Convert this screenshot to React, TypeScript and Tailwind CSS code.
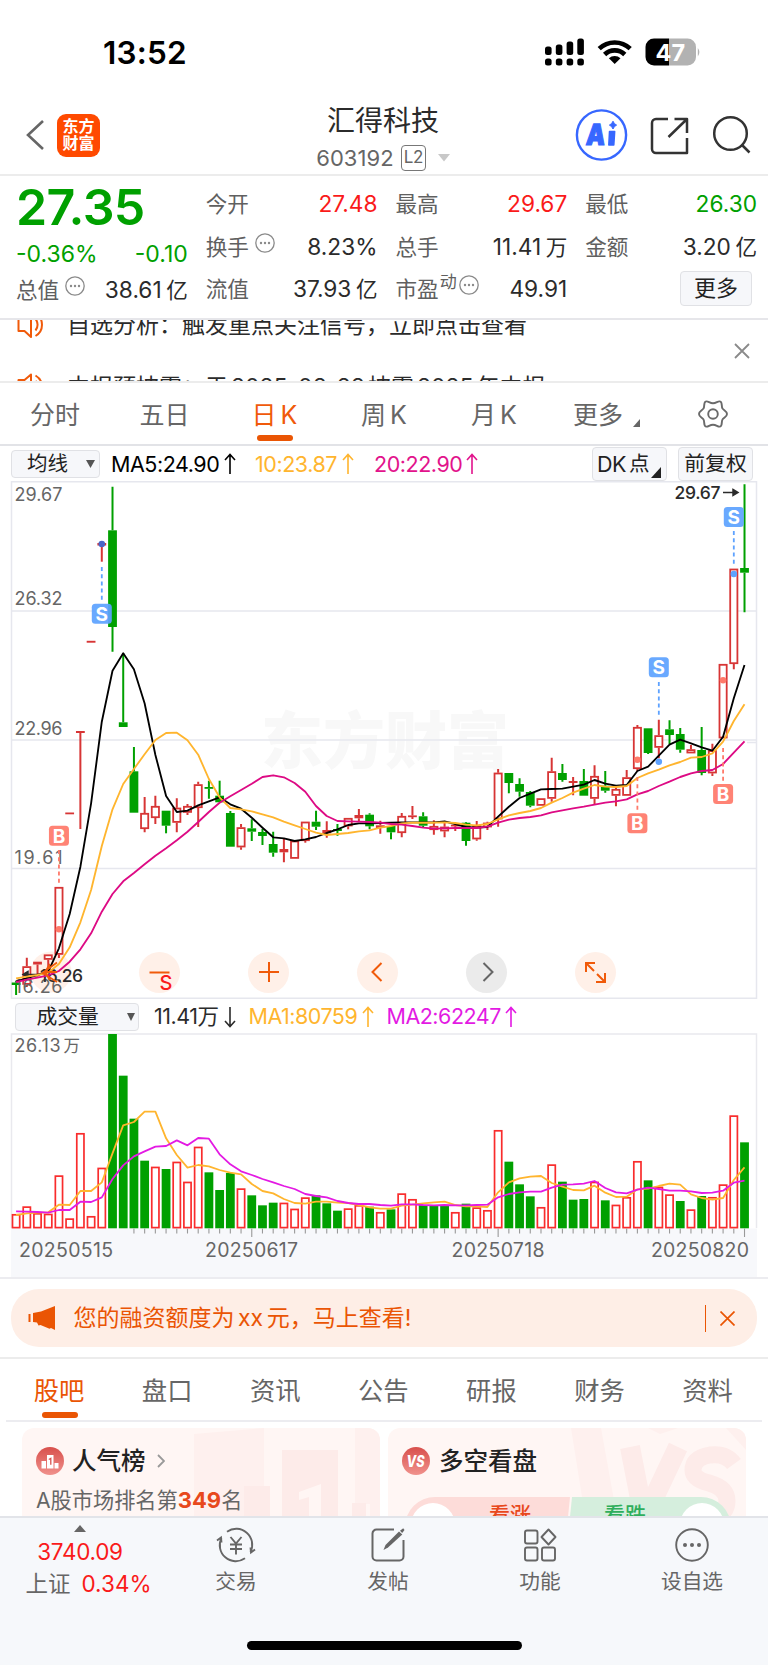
import React from "react";

type Candle = [up: 0 | 1, high: number, top: number, bottom: number, low: number];

// one entry per trading day: direction, high, body top, body bottom, low (chart y)
const candles: Candle[] = [
  [0, 980.7, 982.5, 985, 995], [1, 957.7, 966.3, 984.7, 987], [1, 961.7, 961.7, 964.5, 976.7], [1, 954.5, 954.5, 959.7, 973],
  [1, 887, 887, 954.7, 958], [1, 812.5, 812.5, 814.3, 814.3], [1, 731, 731, 733, 829], [1, 640.8, 640.8, 642.7, 642.7],
  [1, 543, 543, 545.5, 561.7], [0, 486.7, 530.3, 627, 651.7], [0, 653, 722.3, 727, 727], [0, 747, 771.3, 812.7, 812.7],
  [1, 797, 813, 829, 832.3], [1, 795.7, 806, 818, 824], [0, 810.7, 810.7, 825.7, 833.3], [1, 798.3, 807.7, 822.7, 832.3],
  [1, 804, 806, 812.7, 815], [1, 781.7, 784.3, 808, 827], [0, 780.7, 787, 788.7, 798.7], [0, 780.7, 795.7, 802.3, 802.3],
  [0, 811, 813, 846.7, 846.7], [1, 824, 827.3, 847.3, 849.7], [0, 819.3, 828.3, 831.7, 841], [0, 829, 832, 836, 845],
  [0, 831.7, 844, 852.7, 856.7], [1, 839, 849, 852.3, 862.3], [1, 840.7, 840.7, 858.7, 858.7], [1, 821.7, 821.7, 841, 842.7],
  [0, 810.7, 821.7, 826.7, 830], [1, 821.3, 830, 833.3, 837.7], [0, 824, 829, 831, 835.7], [1, 818, 818, 826.3, 829.3],
  [1, 809, 815, 818.3, 821.7], [0, 813.3, 814.7, 826.3, 829.3], [1, 820.7, 825.3, 828, 833.7], [0, 826, 826, 832.3, 839.3],
  [1, 813, 816, 833, 837.3], [1, 806, 815.4, 816.8, 819], [0, 812.3, 816.3, 825.7, 827.3], [1, 820.3, 826, 830, 834.7],
  [1, 822.7, 826.7, 831.3, 837.3], [1, 823.3, 824.7, 826.3, 831], [0, 822, 822.7, 841, 845.7], [1, 821, 825.3, 839.3, 840.7],
  [1, 821.7, 822.7, 827.3, 830], [1, 769, 772.7, 819.3, 826.7], [0, 773, 773, 783, 793.3], [0, 778.3, 784, 791.7, 796.7],
  [0, 791, 792, 805.7, 807.3], [1, 798.3, 798.3, 805.7, 805.7], [1, 757.7, 771.3, 798.7, 801.7], [0, 764, 773, 780, 781.7],
  [1, 777, 781, 783, 795.3], [0, 769, 781, 795.7, 795.7], [1, 765.3, 776, 798.7, 804.3], [0, 771, 785.7, 790.7, 792.7],
  [1, 785, 789, 795.7, 806.3], [1, 770, 777.3, 795.7, 795.7], [1, 725, 727, 769, 771], [0, 728.3, 728.3, 753, 754],
  [1, 719.7, 735.3, 747.7, 758.3], [0, 720.3, 729.3, 735, 744], [0, 728, 734, 749.7, 752.7], [1, 745, 749.3, 753.3, 753.3],
  [0, 727, 750, 773, 775.3], [1, 743.7, 750.3, 773.3, 776], [1, 664, 664, 738.3, 738.3], [1, 568.7, 568.7, 664, 669.3],
  [0, 484.3, 568, 572.7, 612.3],
];

const ma5 = [
  981.7, 978, 975, 971.7, 948.3, 914, 866.7, 803.3, 721.7, 670.7, 653.3, 669.3, 703.3, 755, 796, 812, 810.7, 805.3, 801.3, 797.3,
  804.3, 808.7, 817.7, 827.7, 837.3, 838.3, 841, 839.3, 837, 833, 829.3, 825, 823.3, 823.3, 823, 822.7, 822.5, 822.3, 822.3, 822.3,
  821.3, 824, 827, 827.7, 827, 816.7, 806.7, 798, 793.7, 789.3, 789, 788.7, 786.7, 784.7, 780, 783.7, 785.7, 785, 771, 766.7,
  755.7, 744.7, 739.7, 743.3, 747.3, 750.7, 736.7, 698.3, 665,
];
const ma10 = [
  978.3, 976.7, 975, 972.7, 964, 947.3, 922.3, 890, 846, 809.3, 784, 769, 754.3, 740, 733, 732.7, 740.3, 754.7, 779, 797.3,
  808, 809.3, 811.3, 814.3, 817.3, 821.7, 825.3, 829, 832.7, 835, 834, 833, 831.3, 830.3, 827.7, 826, 823.3, 822.7, 822.7, 822.7,
  822.3, 823, 824.7, 825.3, 824, 819.3, 815.3, 813, 811, 808, 802.7, 798, 792.7, 788.7, 785, 786.7, 787, 786, 778, 773.3,
  769.7, 765.3, 762, 757.7, 757, 753.3, 741.7, 721, 704.3,
];
const ma20 = [
  982, 979.7, 977.7, 975.3, 971, 961.7, 949.3, 933.3, 911.7, 894, 881.3, 873, 864.3, 855.7, 848.3, 840.3, 831.7, 822, 812, 802.7,
  796.3, 790, 783.7, 777, 775.3, 777.3, 783, 791.7, 806, 816, 821, 821.3, 821.7, 822, 822.7, 824, 824.7, 826, 827.7, 828.7,
  828.3, 828, 828, 828, 826.7, 822.7, 819.7, 818, 817, 815.3, 812.3, 810.3, 808.3, 806.7, 804.7, 802.7, 801.3, 799.3, 794.3, 791,
  786, 781.7, 777, 773.3, 771, 770, 764, 752.7, 741.3,
];

// volume bar tops, in thirds of a pixel below y=1000
const volumes = [
  642, 619, 639, 641, 526, 655, 399, 648, 503, 102, 227, 356, 482, 500, 507, 485, 545, 440, 517, 570,
  519, 565, 586, 616, 608, 608, 626, 592, 586, 610, 632, 625, 615, 620, 636, 628, 580, 597, 615, 617,
  615, 636, 611, 622, 630, 390, 485, 553, 589, 621, 493, 545, 599, 597, 545, 601, 614, 591, 483, 541,
  560, 583, 603, 628, 588, 591, 553, 346, 427,
];
const volumeDown = new Set([9, 10, 11, 12, 14, 18, 19, 20, 22, 23, 24, 28, 29, 30, 33, 35, 38, 39, 40, 42, 46, 47, 48, 51, 52, 53, 55, 59, 62, 64, 68]);
const volMa1 = [
  645, 640, 638, 637, 614, 615, 573, 573, 547, 460, 376, 366, 335, 335, 415, 465, 503, 495, 499, 510,
  518, 523, 552, 573, 580, 597, 609, 611, 605, 605, 608, 609, 615, 622, 626, 626, 617, 614, 610, 607,
  605, 615, 619, 619, 621, 577, 547, 535, 530, 528, 549, 560, 570, 571, 557, 578, 591, 590, 568, 566,
  558, 551, 554, 583, 594, 599, 594, 540, 502,
];
const volMa2 = [
  634, 635, 636, 638, 630, 630, 605, 606, 592, 537, 496, 469, 454, 440, 438, 421, 436, 414, 416, 463,
  493, 514, 525, 537, 547, 558, 567, 582, 588, 592, 603, 609, 612, 612, 615, 617, 613, 613, 615, 616,
  615, 616, 616, 615, 614, 592, 582, 577, 575, 575, 563, 554, 553, 551, 543, 564, 577, 580, 569, 563,
  567, 572, 572, 574, 579, 578, 572, 548, 542,
];

const xAt = (i: number) => 16.1 + i * 10.712;
const line = (values: number[]) => values.map((v, i) => `${xAt(i).toFixed(1)},${v}`).join(" ");
const volY = (v: number) => 1000 + v / 3;

const marks = [
  { kind: "S", i: 8, y: 613.7, dot: 544, from: 567, to: 602 },
  { kind: "S", i: 67, y: 517, dot: 574, from: 531, to: 565 },
  { kind: "S", i: 60, y: 667.3, dot: 761.7, from: 682, to: 716 },
  { kind: "B", i: 4, y: 835.7, dot: 929.3, from: 850, to: 884 },
  { kind: "B", i: 58, y: 823.3, dot: 759.7, from: 777, to: 810 },
  { kind: "B", i: 66, y: 794, dot: 680.3, from: 748, to: 781 },
];

const priceLabels = [
  { y: 501, text: "29.67" },
  { y: 605, text: "26.32" },
  { y: 734.7, text: "22.96" },
  { y: 863.5, text: "19.61" },
  { y: 992.8, text: "16.26" },
];

function Dots() {
  return (
    <svg width="20" height="20" viewBox="0 0 20 20" className="-mt-2 shrink-0" fill="#8a8a8a">
      <circle cx="10" cy="10" r="9.2" fill="none" stroke="#8a8a8a" strokeWidth="1.3" />
      <circle cx="6" cy="10" r="1.2" />
      <circle cx="10" cy="10" r="1.2" />
      <circle cx="14" cy="10" r="1.2" />
    </svg>
  );
}

type StatProps = { label: string; value: string; unit?: string; color?: string; extra?: React.ReactNode };

function Stat({ label, value, unit, color = "text-[#2b2b2b]", extra }: StatProps) {
  return (
    <div className="flex h-[42.6px] items-center">
      <span className="text-[21.6px] text-[#606060]">{label}</span>
      {extra}
      <span className={`ml-auto text-[22.7px] ${color}`}>{value}</span>
      {unit && <span className="ml-[4.5px] text-[21.6px] text-[#2b2b2b]">{unit}</span>}
    </div>
  );
}

function StatusBar() {
  return (
    <div className="flex h-[96px] items-center pt-[9px] pl-[103px] pr-[67px]">
      <span className="text-[31.5px] font-semibold tracking-[0.2px] text-black">13:52</span>
      <svg width="156" height="30" viewBox="545 37.5 156 30" className="ml-auto">
        <rect x="545" y="46" width="6.6" height="8.5" rx="2.5" />
        <rect x="555.8" y="44" width="6.6" height="10.5" rx="2.5" />
        <rect x="566.6" y="41" width="6.6" height="13.5" rx="2.5" />
        <rect x="577.3" y="38" width="6.6" height="16.5" rx="2.5" />
        {[545, 555.8, 566.6, 577.3].map((x) => (
          <rect key={x} x={x} y="58" width="6.6" height="7" rx="2.5" />
        ))}
        <g fill="none" stroke="#000" strokeWidth="4.6">
          <path d="M599.2 48.2a22.5 22.5 0 0 1 31 0" />
          <path d="M604.6 54a14.5 14.5 0 0 1 20.2 0" />
        </g>
        <path d="M614.7 63.6l-5.8-5.8a8.6 8.6 0 0 1 11.6 0z" />
        <path d="M654 38h15v27h-15a8.5 8.5 0 0 1-8.5-8.5v-10a8.5 8.5 0 0 1 8.5-8.5z" />
        <path d="M669 38h18.5a8.5 8.5 0 0 1 8.5 8.5v10a8.5 8.5 0 0 1-8.5 8.5h-18.5z" fill="#b2b2b2" />
        <path d="M697.8 47.5q3.2 4 0 8.5z" fill="#b2b2b2" />
        <text x="670.3" y="60" textAnchor="middle" fill="#fff" fontSize="23.5" fontWeight="700">47</text>
      </svg>
    </div>
  );
}

function Header() {
  return (
    <header className="flex h-[80px] items-center border-b-2 border-[#ececec] pl-[25px] pr-[17px]">
      <svg width="20" height="32" viewBox="0 0 20 32" fill="none" stroke="#666" strokeWidth="2.6">
        <path d="M18 2L3 16l15 14" />
      </svg>
      <div className="ml-[12px] flex h-[43px] w-[43px] flex-col items-center justify-center rounded-[9px] bg-[#ff4a00] text-[16px] leading-[17.5px] font-bold text-white">
        <span>东方</span>
        <span>财富</span>
      </div>
      <div className="ml-[208px] flex w-[150px] flex-col items-center pt-[7px]">
        <div className="text-[28px] leading-[34px] text-[#2b2b2b]">汇得科技</div>
        <div className="mt-[5px] flex h-[30px] items-center">
          <span className="text-[22px] tracking-[0.1px] text-[#666]">603192</span>
          <span className="ml-[7px] flex h-[26px] w-[25px] items-center justify-center rounded-[4px] border-[1.5px] border-[#777] text-[17px] tracking-[-0.5px] text-[#666]">L2</span>
          <svg width="12" height="8" viewBox="0 0 12 8" className="ml-[12px]" fill="#c8c8c8">
            <path d="M0 0h12L6 7.5z" />
          </svg>
        </div>
      </div>
      <svg width="176" height="52" viewBox="575 109 176 52" className="ml-auto" fill="none">
        <circle cx="601.5" cy="135" r="24.6" stroke="#3767ff" strokeWidth="2.4" />
        <text x="0" y="0" transform="translate(585.5 145) skewX(-5)" textLength="19" lengthAdjust="spacingAndGlyphs" fill="#3767ff" stroke="#3767ff" strokeWidth="1.2" fontSize="29" fontWeight="900">A</text>
        <path d="M609.5 131.5h5.2l-.9 13.5h-5z" fill="#3767ff" stroke="#3767ff" strokeWidth="1.5" strokeLinejoin="round" />
        <path d="M613 121.2q1 2.8 3.6 3.9-2.6 1.1-3.6 3.9-1-2.8-3.6-3.9 2.6-1.1 3.6-3.9z" fill="#3767ff" stroke="#3767ff" />
        <g stroke="#333" strokeWidth="2.5">
          <path d="M668 119h-12a4 4 0 0 0-4 4v26a4 4 0 0 0 4 4h31v-15M674.5 119H687v14M687 119l-18.5 18" strokeLinejoin="round" />
          <circle cx="730.5" cy="133.5" r="16.3" />
          <path d="M741.5 144.5l8 8" />
        </g>
      </svg>
    </header>
  );
}

function Quote() {
  return (
    <section className="grid h-[144px] grid-cols-4 gap-[18px] border-b-2 border-[#e6e6ea] pt-[7px] pr-[11px] pl-[16px]">
      <div className="text-[#00a000]">
        <div className="h-[50px] text-[50px] leading-[48px] font-semibold tracking-[-0.6px]">27.35</div>
        <div className="flex h-[39px] items-center justify-between pt-[3px] text-[23px]">
          <span>-0.36%</span>
          <span>-0.10</span>
        </div>
        <div className="-mt-[3px]">
          <Stat label="总值" value="38.61" unit="亿" extra={<span className="ml-[6px]"><Dots /></span>} />
        </div>
      </div>
      <div>
        <Stat label="今开" value="27.48" color="text-[#fa1a1a]" />
        <Stat label="换手" value="8.23%" extra={<span className="ml-[6px]"><Dots /></span>} />
        <Stat label="流值" value="37.93" unit="亿" />
      </div>
      <div>
        <Stat label="最高" value="29.67" color="text-[#fa1a1a]" />
        <Stat label="总手" value="11.41" unit="万" />
        <Stat
          label="市盈"
          value="49.91"
          extra={
            <>
              <span className="-mt-[13px] ml-[1px] text-[17px] text-[#606060]">动</span>
              <span className="ml-[2px]"><Dots /></span>
            </>
          }
        />
      </div>
      <div>
        <Stat label="最低" value="26.30" color="text-[#00a000]" />
        <Stat label="金额" value="3.20" unit="亿" />
        <button className="mt-[2.5px] mr-[5px] ml-auto flex h-[35px] w-[72px] items-center justify-center rounded-[4px] border-[1.5px] border-[#e0e1e5] bg-[#f6f7fa] text-[22px] text-[#222]">更多</button>
      </div>
    </section>
  );
}

function Speaker() {
  return (
    <svg width="32" height="28" viewBox="0 0 32 28" fill="none" stroke="#f05a0a" strokeWidth="2" className="shrink-0">
      <path d="M14 1.5L7.5 7H1.5v13h6L14 26z" strokeLinejoin="round" />
      <path d="M18.5 8a9 9 0 0 1 0 11.5M18.5 2.5a13 13 0 0 1 0 22.5" />
    </svg>
  );
}

function News() {
  return (
    <section className="flex h-[63px] items-start overflow-hidden border-b-2 border-[#ececec] pr-[18px] pl-[17px] text-[23px] text-[#2b2b2b]">
      <div className="-mt-[26px] flex-1">
        <div className="flex h-[62px] items-center gap-[18px]">
          <Speaker />
          <span className="whitespace-nowrap">自选分析：触发重点关注信号，立即点击查看</span>
        </div>
        <div className="flex h-[62px] items-center gap-[18px]">
          <Speaker />
          <span className="whitespace-nowrap">
            中报预披露：于<span className="mx-[3px]">2025-08-28</span>披露<span className="mx-[3px]">2025</span>年中报
          </span>
        </div>
      </div>
      <svg width="16" height="16" viewBox="0 0 16 16" className="mt-[23px]" stroke="#8a8a8a" strokeWidth="1.8">
        <path d="M1 1l14 14M15 1L1 15" />
      </svg>
    </section>
  );
}

const periods = [
  { label: "分时", width: "w-[110px]" },
  { label: "五日", width: "w-[109px]" },
  { label: "日", suffix: "K", width: "w-[111px]", active: true },
  { label: "周", suffix: "K", width: "w-[108px]" },
  { label: "月", suffix: "K", width: "w-[112px]" },
];

function PeriodTabs() {
  return (
    <nav className="flex h-[63px] border-b-2 border-[#e2e3e7] text-[25px] text-[#666]">
      {periods.map((p) => (
        <div key={p.label} className={`flex flex-col items-center pt-[13.5px] ${p.width} ${p.active ? "text-[#f05a0a]" : ""}`}>
          <span className="leading-[37px]">
            {p.label}
            {p.suffix && <span className="ml-[4px]">{p.suffix}</span>}
          </span>
          {p.active && <span className="mt-[1.5px] h-[6px] w-[36px] rounded-full bg-[#ea5504]" />}
        </div>
      ))}
      <div className="flex w-[118px] pt-[13.5px] pl-[23px] leading-[37px]">
        更多
        <svg width="7" height="8" viewBox="0 0 7 8" className="mt-[22px] ml-[10px]" fill="#666">
          <path d="M7 0v8H0z" />
        </svg>
      </div>
      <svg width="30" height="30" viewBox="-15 -15 30 30" className="mt-[16px] ml-[30px]" fill="none" stroke="#6a6a6a" strokeWidth="1.9">
        <path strokeLinejoin="round" d="M-7.3-12.5C-5-13.5-3.5-10.7 0-10.7S5-13.5 7.3-12.5 8.2-7.3 9.5-5.5 14-2.8 14 0 10.8 3.7 9.5 5.5 9.6 11.5 7.3 12.5 3.5 10.7 0 10.7-5 13.5-7.3 12.5-8.2 7.3-9.5 5.5-14 2.8-14 0-10.8-3.7-9.5-5.5-9.6-11.5-7.3-12.5z" />
        <circle r="4.8" />
      </svg>
    </nav>
  );
}

function Arrow({ color, down }: { color: string; down?: boolean }) {
  return (
    <svg width="12" height="22" viewBox="0 0 12 22" fill="none" stroke={color} strokeWidth="1.6" className={`shrink-0 ${down ? "rotate-180" : ""}`}>
      <path d="M6 21V1.5M1 7l5-5.5L11 7" />
    </svg>
  );
}

function PriceLegend() {
  return (
    <div className="flex h-[35px] items-center pt-[1px] pr-[15px] pl-[11px] text-[21.5px] tracking-[-0.45px] whitespace-nowrap">
      <div className="flex h-[28px] w-[89px] items-center rounded-[4px] border-[1.5px] border-[#e0e1e5] bg-[#f6f7fa] pl-[15px] text-[20.5px] tracking-normal text-[#222]">
        均线
        <svg width="9" height="8" viewBox="0 0 9 8" className="ml-[18px]" fill="#555"><path d="M0 0h9L4.5 8z" /></svg>
      </div>
      <div className="ml-[11px] flex w-[144px] items-center gap-[4.5px] text-black"><span>MA5:24.90</span><Arrow color="#000" /></div>
      <div className="flex w-[119px] items-center gap-[4.5px] text-[#ffb52e]"><span>10:23.87</span><Arrow color="#ffb52e" /></div>
      <div className="flex items-center gap-[4px] text-[#e2138c]"><span>20:22.90</span><Arrow color="#e2138c" /></div>
      <div className="ml-auto flex h-[34px] w-[75px] items-center rounded-[4px] border-[1.5px] border-[#e0e1e5] bg-[#f6f7fa] pl-[4px] text-[#222]">
        DK<span className="ml-[3px] text-[20.5px]">点</span>
        <svg width="10" height="11" viewBox="0 0 10 11" className="mt-[17px] ml-[2px]" fill="#222"><path d="M10 0v11H0z" /></svg>
      </div>
      <div className="ml-[11px] flex h-[34px] w-[75px] items-center justify-center rounded-[4px] border-[1.5px] border-[#e0e1e5] bg-[#f6f7fa] text-[20.8px] tracking-normal text-[#222]">前复权</div>
    </div>
  );
}

function PriceChart() {
  return (
    <div className="relative h-[518px]">
      <svg width="768" height="518" viewBox="0 481 768 518">
        <text x="385" y="764" textAnchor="middle" fontSize="62" fontWeight="900" fill="#f8f8f8">东方财富</text>
        <g stroke="#e6e7ee" strokeWidth="1.5" fill="none">
          <path d="M11.5 481.8H756.5V998.3H11.5zM11.5 611H756.5M11.5 740H756.5M11.5 868.5H756.5M747 742.5h9.5" />
        </g>
        <circle cx="51" cy="972" r="20.5" fill="#fff0e8" />
        {candles.map(([up, high, top, bottom, low], i) => {
          const color = up ? "#d73535" : "#00a000";
          const x = xAt(i);
          const hollow = up === 1 && bottom - top > 3.5;
          return (
            <g key={i} stroke={color} fill={hollow ? "#fff" : color}>
              <path d={`M${x} ${high}V${top}M${x} ${bottom}V${low}`} strokeWidth="2" />
              {hollow ? (
                <rect x={x - 3.6} y={top + 0.8} width="7.2" height={bottom - top - 1.6} strokeWidth="1.8" />
              ) : (
                <rect x={x - 4.4} y={top} width="8.8" height={Math.max(bottom - top, 1.8)} stroke="none" />
              )}
            </g>
          );
        })}
        <g fontSize="18" fill="#666">
          {priceLabels.map((l) => (
            <text key={l.text} x="14.5" y={l.y} textLength="48">{l.text}</text>
          ))}
        </g>
        <g fontSize="17.5" fontWeight="500" fill="#2b2b2b">
          <text x="674.5" y="499" textLength="46">29.67</text>
          <text x="40" y="982" textLength="43">16.26</text>
        </g>
        <g stroke="#2b2b2b" strokeWidth="1.5" fill="#2b2b2b">
          <path d="M723 492.5h13M733 489.5l5 3-5 3z" />
          <path d="M40 974.5H26M28 971.5l-5 3 5 3z" />
        </g>
        <g fill="none" strokeWidth="1.85" strokeLinejoin="round">
          <polyline points={line(ma5)} stroke="#000" />
          <polyline points={line(ma10)} stroke="#ffb52e" />
          <polyline points={line(ma20)} stroke="#dd0a84" />
        </g>
        <path d="M57 962.5l-14.5 10.5 14.5 9M57 972h-13M50 964l-5 8 5 8" fill="none" stroke="#f05a0a" strokeWidth="1.8" />
        {marks.map((m) => {
          const x = xAt(m.i);
          const color = m.kind === "S" ? "#5ea2ff" : "#ff7a6a";
          return (
            <g key={m.i}>
              <path d={`M${x} ${m.from}V${m.to}`} stroke={color} strokeWidth="1.8" strokeDasharray="4 3.2" />
              <circle cx={x} cy={m.dot} r="3.3" fill={m.i === 8 ? "#4a66c8" : color} />
              <rect x={x - 10} y={m.y - 10} width="20" height="20" rx="3.5" fill={color} fillOpacity="0.93" />
              <text x={x} y={m.y + 6.8} textAnchor="middle" fontSize="19" fontWeight="700" fill="#fff">{m.kind}</text>
            </g>
          );
        })}
      </svg>
      {/* Chart controls */}
      <div className="absolute top-[470.5px] left-[139px] flex gap-[68px]">
        <span className="flex h-[41px] w-[41px] items-center justify-center rounded-full bg-[#fff0e8]">
          <svg width="41" height="41" viewBox="0 0 41 41"><path d="M10.5 20.5h20" stroke="#f05a0a" strokeWidth="2" /><text x="20.5" y="38" fontSize="20" fontWeight="500" fill="#fa1a1a">S</text></svg>
        </span>
        <span className="flex h-[41px] w-[41px] items-center justify-center rounded-full bg-[#fff0e8]">
          <svg width="20" height="20" viewBox="0 0 20 20" stroke="#f05a0a" strokeWidth="2"><path d="M0 10h20M10 0v20" /></svg>
        </span>
        <span className="flex h-[41px] w-[41px] items-center justify-center rounded-full bg-[#fff0e8] pr-[2px]">
          <svg width="12" height="20" viewBox="0 0 12 20" fill="none" stroke="#f05a0a" strokeWidth="2"><path d="M10.5 1L1.5 10l9 9" /></svg>
        </span>
        <span className="flex h-[41px] w-[41px] items-center justify-center rounded-full bg-[#ebebeb] pl-[2px]">
          <svg width="12" height="20" viewBox="0 0 12 20" fill="none" stroke="#666" strokeWidth="2"><path d="M1.5 1l9 9-9 9" /></svg>
        </span>
        <span className="flex h-[41px] w-[41px] items-center justify-center rounded-full bg-[#fff0e8]">
          <svg width="21" height="21" viewBox="0 0 21 21" fill="none" stroke="#f05a0a" strokeWidth="2"><path d="M1 10V1h9M1.5 1.5L9 9M20 11v9h-9M19.5 19.5L12 12" /></svg>
        </span>
      </div>
    </div>
  );
}

function VolumeLegend() {
  return (
    <div className="flex h-[34px] items-center pt-[1px] pl-[15px] text-[21.5px] tracking-[-0.5px] whitespace-nowrap">
      <div className="flex h-[28px] w-[124px] items-center rounded-[4px] border-[1.5px] border-[#e0e1e5] bg-[#f6f7fa] pl-[20.5px] text-[20.8px] tracking-normal text-[#222]">
        成交量
        <svg width="8" height="8" viewBox="0 0 8 8" className="ml-[28px]" fill="#555"><path d="M0 0h8L4 8z" /></svg>
      </div>
      <div className="ml-[15px] flex w-[94.5px] items-center gap-[6px] text-[#2b2b2b]"><span>11.41万</span><Arrow color="#2b2b2b" down /></div>
      <div className="flex w-[138px] items-center gap-[5px] text-[#ffb52e]"><span>MA1:80759</span><Arrow color="#ffb52e" /></div>
      <div className="flex items-center gap-[4px] text-[#e31ae3]"><span>MA2:62247</span><Arrow color="#e31ae3" /></div>
    </div>
  );
}

function VolumeChart() {
  return (
    <svg width="768" height="246" viewBox="0 1033 768 246" className="block">
      <rect x="11" y="1228.5" width="746" height="49" fill="#f7f8fb" />
      <path d="M11.5 1228V1034H756.5V1228" fill="none" stroke="#e9e9ee" strokeWidth="1.5" />
      <path d="M0 1278H768" stroke="#ececf0" strokeWidth="2" />
      <g fontSize="18" fill="#666">
        <text x="14.5" y="1051.5" textLength="46">26.13</text>
        <text x="63.5" y="1051.5" fontSize="16.5">万</text>
      </g>
      {volumes.map((v, i) => {
        const y = volY(v);
        return volumeDown.has(i) ? (
          <rect key={i} x={xAt(i) - 4.4} y={y} width="8.8" height={1228.3 - y} fill="#00a000" />
        ) : (
          <rect key={i} x={xAt(i) - 3.6} y={y + 0.8} width="7.2" height={1226.8 - y} fill="#fff" stroke="#f92c2c" strokeWidth="1.7" />
        );
      })}
      <g fill="none" strokeWidth="1.8" strokeLinejoin="round">
        <polyline points={line(volMa1.map(volY))} stroke="#ffb52e" />
        <polyline points={line(volMa2.map(volY))} stroke="#e31ae3" />
      </g>
      {volumes.map((_, i) =>
        i < 11 ? null : (
          <path key={i} d={`M${xAt(i)} 1228.5V${[22, 45, 68].includes(i) ? 1237 : 1233.5}`} stroke="#999" strokeWidth="1.1" />
        ),
      )}
      <g fontSize="19.5" fill="#666">
        <text x="19" y="1256.5" textLength="94">20250515</text>
        <text x="205" y="1256.5" textLength="93">20250617</text>
        <text x="451.5" y="1256.5" textLength="93">20250718</text>
        <text x="651" y="1256.5" textLength="98">20250820</text>
      </g>
    </svg>
  );
}

function Banner() {
  return (
    <div className="border-b-2 border-[#ececec] px-[11px] pt-[10px] pb-[10px]">
      <div className="flex h-[58px] items-center rounded-[28px] bg-[#feeee6] pr-[22px] pl-[17px] text-[#ea5504]">
        <svg width="28" height="24" viewBox="0 0 28 24" fill="#ea5504">
          <path d="M0.5 8h2v8h-2zM5 7l8-1.5L27 0v24l-4-2-1.5 0.8-9-3.8-2 .5-1.5-3L5 16z" />
        </svg>
        <span className="ml-[17.5px] text-[23px] whitespace-nowrap">
          您的融资额度为<span className="mx-[3.5px]">xx</span>元，马上查看!
        </span>
        <span className="ml-auto h-[27px] w-[1.5px] bg-[#ea5504]" />
        <svg width="15" height="15" viewBox="0 0 15 15" className="ml-[14px]" stroke="#ea5504" strokeWidth="1.7"><path d="M0.5 0.5l14 14M14.5 0.5l-14 14" /></svg>
      </div>
    </div>
  );
}

const sections = ["股吧", "盘口", "资讯", "公告", "研报", "财务", "资料"];

function SectionTabs() {
  return (
    <nav className="mx-[6px] flex h-[63px] border-b-2 border-[#ececf0] text-[25.3px] text-[#666]">
      {sections.map((s, i) => (
        <div key={s} className={`-ml-[1px] flex w-[109.1px] shrink-0 flex-col items-center pt-[13px] ${i === 0 ? "text-[#ea5504]" : ""}`}>
          <span className="-ml-[1px] leading-[37px]">{s}</span>
          {i === 0 && <span className="mt-[3px] h-[6px] w-[36px] rounded-full bg-[#ea5504]" />}
        </div>
      ))}
    </nav>
  );
}

function Cards() {
  return (
    <div className="flex h-[94px] gap-[8px] overflow-hidden pt-[6px] pl-[22px]">
      <div className="relative h-[120px] w-[358px] overflow-hidden rounded-[12px] bg-[#fff6f4]">
        <svg width="358" height="120" className="absolute inset-0" fill="#fdebe9">
          <path d="M172 6l70-6v58h-20v62h-50zM333 0h25v120h-10V76h-15z" fill="#fef0ee" />
          <path d="M222 58h26v62h-26zM260 22h56v98h-56z" />
          <path d="M330 75h14v45h-14z" />
          <path d="M277 64l22-8v64h-12V69l-10 3z" fill="#fff6f4" />
        </svg>
        <div className="relative flex items-center pt-[15px] pl-[14px] text-[24.5px] leading-[36px] font-medium text-[#222]">
          <svg width="28" height="28" viewBox="0 0 28 28">
            <defs><linearGradient id="rank" x1="0" y1="0" x2="0" y2="1"><stop stopColor="#d8504c" /><stop offset="1" stopColor="#f0918c" /></linearGradient></defs>
            <circle cx="14" cy="14" r="14" fill="url(#rank)" />
            <path d="M5.5 14h4.5v7.5H5.5zM11 8h6.5v13.5H11zM18.5 16h4v5.5h-4z" fill="#fff" />
            <path d="M12.8 12.5l2-1.2v6.5" fill="none" stroke="#d8504c" strokeWidth="1.3" />
          </svg>
          <span className="ml-[8px]">人气榜</span>
          <svg width="8" height="14" viewBox="0 0 8 14" className="ml-[11px]" fill="none" stroke="#999" strokeWidth="1.8"><path d="M1 1l6 6-6 6" /></svg>
        </div>
        <div className="relative mt-[5px] pl-[14px] text-[21.2px] leading-[32px] text-[#666]">
          A股市场排名第<span className="text-[22px] font-bold text-[#e8481c]">349</span>名
        </div>
      </div>
      <div className="relative h-[120px] w-[358px] overflow-hidden rounded-[12px] bg-[#fff6f4]">
        <svg width="358" height="120" className="absolute inset-0">
          <path d="M183 0h30l18 100h-32z" fill="#fef0ee" />
          <path d="M260 0l12 6L290 0zM358 0v22l-20-22z" fill="#fef0ee" />
          <g fill="none" stroke="#fdebe9">
            <path d="M242 19l14 72 34-72" strokeWidth="20" />
            <path d="M346 36q-8-11-24-9-17 3-17 15 0 9 16 13 18 5 18 18 0 15-20 18-14 2-24-7" strokeWidth="17" />
          </g>
        </svg>
        <div className="relative flex items-center pt-[15px] pl-[14px] text-[24.5px] leading-[36px] font-medium text-[#222]">
          <svg width="28" height="28" viewBox="0 0 28 28">
            <circle cx="14" cy="14" r="14" fill="url(#rank)" />
            <text x="4.5" y="19.8" fontSize="16" fontWeight="800" fontStyle="italic" textLength="18" lengthAdjust="spacingAndGlyphs" fill="#fff">VS</text>
          </svg>
          <span className="ml-[9px]">多空看盘</span>
        </div>
        <svg width="326" height="60" viewBox="0 0 326 60" className="relative mt-[18px] ml-[17px]">
          <path d="M30 0H165l-6 60H0V30A30 30 0 0 1 30 0z" fill="#fddcd9" />
          <path d="M167 0H296a30 30 0 0 1 30 30v30H161z" fill="#d5eedd" />
          <circle cx="28" cy="28" r="22" fill="#fff" />
          <circle cx="297" cy="28" r="22" fill="#fff" />
          <text x="84" y="25" fontSize="21" fontWeight="500" fill="#e8481c">看涨</text>
          <text x="199" y="25" fontSize="21" fontWeight="500" fill="#2fae5c">看跌</text>
        </svg>
      </div>
    </div>
  );
}

function BottomBar() {
  return (
    <footer className="h-[149px] border-t-2 border-[#e2e4e9] bg-[#f6f8fb] text-[20.7px] text-[#666]">
      <div className="flex h-[123px]">
        <div className="flex w-[160px] flex-col items-center pt-[7px] text-[22.5px]">
          <svg width="12" height="7" viewBox="0 0 12 7" fill="#666"><path d="M6 0l6 7H0z" /></svg>
          <span className="mt-[4px] leading-[32px] tracking-[-0.3px] text-[#fa1a1a]">3740.09</span>
          <span className="pl-[17px] leading-[31px] whitespace-nowrap">上证<span className="ml-[11px] text-[#fa1a1a]">0.34%</span></span>
        </div>
        <div className="flex w-[152px] flex-col items-center pt-[9px]">
          <svg width="40" height="36" viewBox="-20 -18 40 36" fill="none" stroke="#666" strokeWidth="1.9">
            <path d="M-9-13.3A16 16 0 0 1 14.5 7M9 13.3A16 16 0 0 1-14.5-7M-19-4.5l4-3 .5 5M19 4.5l-4 3-.5-5" />
            <path d="M-5.5-8L0-1.5 5.5-8M0-1.5V9.500M-6-.5H6M-6 4H6" />
          </svg>
          <span className="mt-[4px] leading-[30px]">交易</span>
        </div>
        <div className="flex w-[152px] flex-col items-center pt-[9px]">
          <svg width="36" height="36" viewBox="0 0 36 36" fill="none" stroke="#666" strokeWidth="2">
            <path d="M24 2.5H6.500a4 4 0 0 0-4 4v23a4 4 0 0 0 4 4h23a4 4 0 0 0 4-4V13" />
            <path d="M13.5 23l2-5L29 4.5l3.3 3L18 20.500z" fill="#666" stroke="none" />
            <path d="M30 3.8l3.2-2.5 1.3 1.8-2.3 3z" fill="#666" stroke="none" />
          </svg>
          <span className="mt-[4px] leading-[30px]">发帖</span>
        </div>
        <div className="flex w-[152px] flex-col items-center pt-[9px]">
          <svg width="36" height="36" viewBox="0 0 36 36" fill="none" stroke="#666" strokeWidth="1.9">
            <rect x="3" y="3.5" width="12.5" height="13" rx="2" />
            <rect x="3" y="20.5" width="12.5" height="13" rx="2" />
            <rect x="20" y="20.5" width="13" height="13" rx="2" />
            <path d="M26.5 2.5l7 7.5-7 7.500-7-7.500z" strokeLinejoin="round" />
          </svg>
          <span className="mt-[4px] leading-[30px]">功能</span>
        </div>
        <div className="flex w-[152px] flex-col items-center pt-[9px]">
          <svg width="36" height="36" viewBox="0 0 36 36" fill="#666">
            <circle cx="18" cy="18" r="15.8" fill="none" stroke="#666" strokeWidth="1.9" />
            <circle cx="11" cy="18" r="2" />
            <circle cx="18" cy="18" r="2" />
            <circle cx="25" cy="18" r="2" />
          </svg>
          <span className="mt-[4px] leading-[30px]">设自选</span>
        </div>
      </div>
      <div className="mx-auto h-[9px] w-[275px] rounded-full bg-black" />
    </footer>
  );
}

export default function App() {
  return (
    <div className="h-[1665px] w-[768px] overflow-hidden bg-white font-['Inter','Noto_Sans_CJK_SC',sans-serif]">
      <StatusBar />
      <Header />
      <Quote />
      <News />
      <PeriodTabs />
      <PriceLegend />
      <PriceChart />
      <VolumeLegend />
      <VolumeChart />
      <Banner />
      <SectionTabs />
      <Cards />
      <BottomBar />
    </div>
  );
}
